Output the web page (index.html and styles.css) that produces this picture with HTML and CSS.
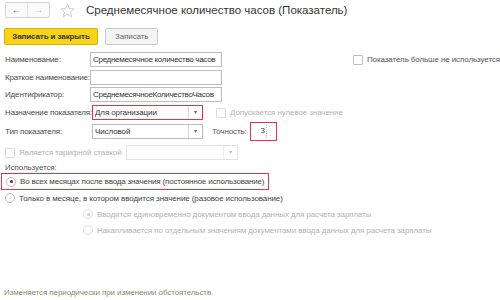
FILE: index.html
```html
<!DOCTYPE html>
<html lang="ru">
<head>
  <meta charset="UTF-8" />
  <title>Среднемесячное количество часов (Показатель)</title>
  <link rel="stylesheet" href="styles.css">
</head>
<body>

  <header class="head">
    <div class="nav">
      <span class="nav-btn">&#8592;</span>
      <span class="nav-btn off">&#8594;</span>
    </div>
    <svg class="star" width="15" height="15" viewBox="0 0 15 15">
      <path d="M7.5 1 L9.4 5.6 L14.2 5.9 L10.5 9 L11.7 13.8 L7.5 11.2 L3.3 13.8 L4.5 9 L0.8 5.9 L5.6 5.6 Z" fill="none" stroke="#c8c8c8" stroke-width="0.9" stroke-linejoin="round"/>
    </svg>
    <h1 class="title">Среднемесячное количество часов (Показатель)</h1>
  </header>

  <div class="toolbar">
    <button class="btn btn-main">Записать и закрыть</button>
    <button class="btn">Записать</button>
  </div>

  <main class="form">
    <div class="row r1">
      <label class="lbl">Наименование:</label>
      <div class="field">Среднемесячное количество часов</div>
      <span class="check"><span class="box"></span>Показатель больше не используется</span>
    </div>

    <div class="row r2">
      <label class="lbl">Краткое наименование:</label>
      <div class="field"></div>
    </div>

    <div class="row r3">
      <label class="lbl">Идентификатор:</label>
      <div class="field">СреднемесячноеКоличествоЧасов</div>
    </div>

    <div class="row r4">
      <label class="lbl">Назначение показателя:</label>
      <div class="select hl">Для организации<span class="arrow">&#9662;</span></div>
      <span class="check off"><span class="box"></span>Допускается нулевое значение</span>
    </div>

    <div class="row r5">
      <label class="lbl">Тип показателя:</label>
      <div class="select">Числовой<span class="arrow">&#9662;</span></div>
      <span class="prec-lbl">Точность:</span>
      <div class="spin hl">3<span class="spin-btn"><i>&#729;</i><i>.</i></span></div>
    </div>

    <div class="row r6">
      <span class="check off"><span class="box"></span>Является тарифной ставкой</span>
      <div class="select sel-off"><span class="arrow">&#9662;</span></div>
    </div>

    <div class="caption">Используется:</div>

    <div class="radio hl on">
      <span class="dot"></span>Во всех месяцах после ввода значения (постоянное использование)
    </div>
    <div class="radio">
      <span class="dot"></span>Только в месяце, в котором вводится значение (разовое использование)
    </div>
    <div class="radio sub off on">
      <span class="dot"></span>Вводится единовременно документом ввода данных для расчета зарплаты
    </div>
    <div class="radio sub off">
      <span class="dot"></span>Накапливается по отдельным значениям документами ввода данных для расчета зарплаты
    </div>
  </main>

  <footer class="note">Изменяется периодически при изменении обстоятельств.</footer>

</body>
</html>
```

FILE: styles.css
```css
body {
  margin: 0;
  width: 500px;
  height: 300px;
  overflow: hidden;
  background: #fff;
  color: #4a4a4a;
  font-family: 'Liberation Sans', Arial, sans-serif;
  font-size: 8px;
  letter-spacing: -0.1px;
  white-space: nowrap;
}

.head {
  display: flex;
  align-items: center;
  height: 20px;
  padding: 0 0 0 5px;
}

.nav {
  display: flex;
  height: 14px;
  border: 1px solid #d4d4d4;
  border-radius: 2px;
  background: #fafafa;
}

.nav-btn {
  width: 21px;
  line-height: 14px;
  text-align: center;
  font-size: 10px;
  font-weight: bold;
  color: #555;
}

.nav-btn.off {
  color: #b5b5b5;
  border-left: 1px solid #e0e0e0;
}

.star {
  margin-left: 10px;
}

.title {
  margin: 0 0 0 11px;
  font-size: 11.5px;
  font-weight: normal;
  letter-spacing: 0;
  color: #333;
}

.toolbar {
  display: flex;
  gap: 7px;
  margin-top: 8px;
  padding-left: 4px;
}

.btn {
  height: 17px;
  padding: 0 9px;
  border: 1px solid #c9c9c9;
  border-radius: 2px;
  background: #f4f4f4;
  color: #666;
  font-family: inherit;
  font-size: 8px;
  letter-spacing: -0.1px;
}

.btn-main {
  width: 94px;
  padding: 0;
  background: #f7d417;
  border-color: #d8b400;
  color: #333;
  font-weight: bold;
}

.form {
  padding: 7px 0 0 5px;
}

.row {
  display: flex;
  align-items: center;
  height: 15px;
  margin-bottom: 3px;
}

.r2 {
  margin-bottom: 2px;
}

.r4 {
  margin-bottom: 4px;
}

.r5 {
  margin-bottom: 6px;
}

.lbl {
  width: 85px;
  flex-shrink: 0;
  letter-spacing: -0.15px;
}

.field {
  box-sizing: border-box;
  width: 132px;
  height: 15px;
  padding: 0 2px;
  border: 1px solid #bcbcbc;
  line-height: 13px;
  letter-spacing: -0.3px;
  color: #333;
  overflow: hidden;
}

.select {
  position: relative;
  box-sizing: border-box;
  width: 111px;
  height: 15px;
  margin-left: 2px;
  padding: 0 2px;
  border: 1px solid #bcbcbc;
  line-height: 13px;
  color: #333;
}

.arrow {
  position: absolute;
  top: 0;
  right: 0;
  width: 13px;
  height: 13px;
  border-left: 1px solid #d8d8d8;
  text-align: center;
  font-size: 6px;
  color: #666;
}

.hl {
  border: 1.5px solid #e2353d;
}

.check {
  display: flex;
  align-items: center;
  color: #555;
}

.r1 .check {
  margin-left: 131px;
}

.r4 .check {
  margin-left: 13px;
}

.box {
  flex-shrink: 0;
  box-sizing: border-box;
  width: 10px;
  height: 10px;
  margin-right: 4px;
  border: 1px solid #bdbdbd;
  border-radius: 1px;
  background: #fff;
}

.check.off {
  color: #b3b3b3;
}

.check.off .box {
  border-color: #dcdcdc;
}

.prec-lbl {
  margin-left: 9px;
  color: #555;
}

.spin {
  position: relative;
  box-sizing: border-box;
  width: 27px;
  height: 19px;
  margin-left: 3px;
  padding-right: 11px;
  line-height: 16px;
  text-align: right;
  color: #333;
}

.spin-btn {
  position: absolute;
  top: 2px;
  right: 2px;
  display: flex;
  flex-direction: column;
  width: 7px;
  height: 13px;
  border-left: 1px dotted #bbb;
  font-size: 6px;
  line-height: 6px;
  text-align: center;
  color: #777;
}

.spin-btn i {
  font-style: normal;
}

.r6 .select {
  width: 112px;
  margin-left: 4px;
}

.sel-off {
  border-color: #e3e3e3;
}

.sel-off .arrow {
  color: #bbb;
  border-color: #eee;
}

.caption {
  margin-top: 3px;
  color: #555;
}

.radio {
  display: flex;
  align-items: center;
  height: 16px;
  color: #444;
}

.radio.hl {
  box-sizing: border-box;
  width: 268px;
  height: 17px;
  margin: 1px 0 0 -4px;
  padding-left: 4px;
  letter-spacing: -0.17px;
}

.dot {
  flex-shrink: 0;
  position: relative;
  box-sizing: border-box;
  width: 10px;
  height: 10px;
  margin-right: 4px;
  border: 1px solid #bdbdbd;
  border-radius: 50%;
  background: #fff;
}

.radio.on .dot::after {
  content: "";
  position: absolute;
  top: 2.5px;
  left: 2.5px;
  width: 3px;
  height: 3px;
  border-radius: 50%;
  background: #3c3c3c;
}

.radio.sub {
  margin-left: 78px;
}

.radio.off {
  color: #b3b3b3;
}

.radio.off .dot {
  border-color: #dedede;
}

.radio.off.on .dot::after {
  background: #c8c8c8;
}

.note {
  position: absolute;
  top: 288px;
  left: 4px;
  color: #8c8a70;
  font-size: 8px;
}
```
